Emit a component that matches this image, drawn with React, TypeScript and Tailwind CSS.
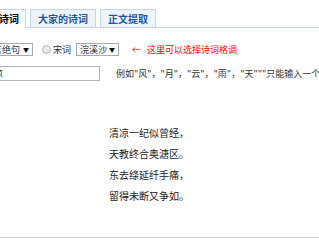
const font = { fontFamily: '"Noto Sans CJK SC", "Liberation Sans", sans-serif' };

const poem = ["清凉一纪似曾经，", "天教终合奥溏区。", "东去绦延纤手痛，", "留得未断又争如。"];

const Tab = ({ label, active }: { label: string; active?: boolean }) => (
  <div
    className={
      active
        ? "shrink-0 h-[19px] -mb-px px-[6px] bg-white border border-b-0 border-[#c5d7ec] text-[10px] font-bold text-black leading-[18px]"
        : "shrink-0 h-[18px] px-[7px] bg-[#eef4fb] border border-b-0 border-[#c5d7ec] text-[10px] font-bold text-[#1d5aa5] leading-[18px]"
    }
  >
    {label}
  </div>
);

const Select = ({ label, className }: { label: string; className: string }) => (
  <div
    className={
      "shrink-0 h-[13px] flex items-center justify-between border border-[#a9a9a9] bg-white px-[3px] text-[9px] text-[#333] " +
      className
    }
  >
    <span>{label}</span>
    <span className="text-[6px] text-black">▼</span>
  </div>
);

export default function App() {
  return (
    <div className="relative w-[319px] h-[240px] overflow-hidden bg-white" style={font}>
      <div className="flex items-end gap-[4px] h-[28px] border-b border-[#c5d7ec] -ml-[8px]">
        <Tab label="诗词" active />
        <Tab label="大家的诗词" />
        <Tab label="正文提取" />
      </div>

      <div className="flex items-center mt-[15px] h-[13px] -ml-[20px]">
        <Select label="七言绝句" className="w-[53px]" />
        <span className="shrink-0 ml-[9px] w-[9px] h-[9px] rounded-full border border-[#b8b8b8] bg-[#e8e8e8]" />
        <span className="shrink-0 ml-[2px] text-[9px] text-[#333]">宋词</span>
        <Select label="浣溪沙" className="ml-[5px] w-[43px]" />
        <span className="shrink-0 ml-[13px] text-[9px] text-[#f00]">←</span>
        <span className="shrink-0 ml-[6px] text-[9px] text-[#f00]">这里可以选择诗词格调</span>
      </div>

      <div className="flex items-center mt-[10px] h-[15px] -ml-[20px]">
        <div className="shrink-0 w-[120px] h-[15px] border border-[#b5b5b5] bg-white pl-[4px] text-[9px] leading-[13px] text-[#222]">
          清凉
        </div>
        <span className="shrink-0 ml-[16px] whitespace-nowrap text-[9px] text-[#333]">
          例如"风"，"月"，"云"，"雨"，"天"""只能输入一个汉字
        </span>
      </div>

      <div className="mt-[41px] flex flex-col items-start pl-[109px] text-[10px] leading-[21px] text-[#222]">
        {poem.map((line) => (
          <div key={line}>{line}</div>
        ))}
      </div>

      <div className="absolute left-0 right-0 top-[237px] border-t border-[#c8c8c8]" />
    </div>
  );
}
